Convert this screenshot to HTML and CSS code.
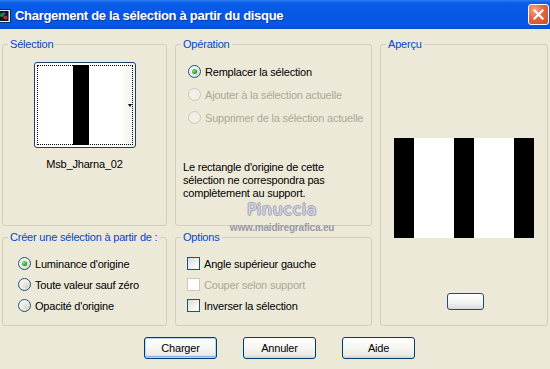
FILE: index.html
```html
<!DOCTYPE html>
<html lang="fr">
<head>
<meta charset="utf-8">
<title>Chargement de la sélection à partir du disque</title>
<link rel="stylesheet" href="styles.css">
</head>
<body>
<div class="dialog">
  <div class="titlebar">
    <svg class="app-icon" width="13" height="14" viewBox="0 0 13 14">
      <rect x="0.5" y="0.5" width="12" height="13" fill="#e8eef8" stroke="#1a2a50"/>
      <rect x="1.5" y="2" width="9" height="10" fill="#101820"/>
      <circle cx="4" cy="6" r="2" fill="#2a8a3a"/>
      <circle cx="7.5" cy="8.5" r="2" fill="#b02a4a"/>
      <circle cx="6" cy="4.5" r="1.3" fill="#3a5ad0"/>
    </svg>
    <span class="title">Chargement de la sélection à partir du disque</span>
    <span class="close">
      <svg width="11" height="11" viewBox="0 0 11 11"><path d="M1.5 1.5 L9.5 9.5 M9.5 1.5 L1.5 9.5" stroke="#fff" stroke-width="2.2" stroke-linecap="square"/></svg>
    </span>
  </div>

  <div class="content">
    <fieldset class="group g-selection">
      <legend>Sélection</legend>
      <div class="thumb">
        <div class="thumb-focus"><span class="thumb-bar"></span></div>
        <span class="thumb-arrow"></span>
      </div>
      <div class="caption">Msb_Jharna_02</div>
    </fieldset>

    <fieldset class="group g-operation">
      <legend>Opération</legend>
      <div class="choices">
        <div class="choice"><span class="radio checked"></span><span>Remplacer la sélection</span></div>
        <div class="choice disabled"><span class="radio"></span><span>Ajouter à la sélection actuelle</span></div>
        <div class="choice disabled"><span class="radio"></span><span>Supprimer de la sélection actuelle</span></div>
      </div>
      <p class="note">Le rectangle d'origine de cette<br>sélection ne correspondra pas<br>complètement au support.</p>
    </fieldset>

    <fieldset class="group g-apercu">
      <legend>Aperçu</legend>
      <div class="preview">
        <span class="stripe black"></span>
        <span class="stripe white"></span>
        <span class="stripe black"></span>
        <span class="stripe white"></span>
        <span class="stripe black"></span>
      </div>
      <div class="mini-btn"></div>
    </fieldset>

    <fieldset class="group g-creer">
      <legend>Créer une sélection à partir de :</legend>
      <div class="choices tight">
        <div class="choice"><span class="radio checked"></span><span>Luminance d'origine</span></div>
        <div class="choice"><span class="radio"></span><span>Toute valeur sauf zéro</span></div>
        <div class="choice"><span class="radio"></span><span>Opacité d'origine</span></div>
      </div>
    </fieldset>

    <fieldset class="group g-options">
      <legend>Options</legend>
      <div class="choices tight">
        <div class="choice"><span class="check"></span><span>Angle supérieur gauche</span></div>
        <div class="choice disabled"><span class="check"></span><span>Couper selon support</span></div>
        <div class="choice"><span class="check"></span><span>Inverser la sélection</span></div>
      </div>
    </fieldset>
  </div>

  <div class="buttons">
    <button class="btn default">Charger</button>
    <button class="btn">Annuler</button>
    <button class="btn">Aide</button>
  </div>

  <div class="watermark">
    <div class="wm-name">Pinuccia</div>
    <div class="wm-url">www.maidiregrafica.eu</div>
  </div>
</div>
</body>
</html>
```

FILE: styles.css
```css
* { box-sizing: border-box; }

html, body {
  margin: 0;
  padding: 0;
  background: #ece9d8;
}

body {
  width: 550px;
  height: 369px;
  overflow: hidden;
  font-family: "Liberation Sans", Arial, sans-serif;
  font-size: 11px;
  letter-spacing: -0.2px;
  color: #000;
}

.dialog {
  position: relative;
  width: 550px;
  height: 369px;
}

/* ---------- title bar ---------- */
.titlebar {
  height: 29px;
  display: flex;
  align-items: center;
  background: linear-gradient(to bottom, #2c7bf2 0%, #0a5ee8 10%, #0458e4 45%, #0557e6 85%, #0a4cd0 100%);
  color: #fff;
  position: relative;
}

.app-icon {
  margin-left: -2px;
  margin-top: 2px;
  flex: none;
}

.title {
  margin-left: 4px;
  font-size: 13px;
  font-weight: bold;
  letter-spacing: -0.3px;
  text-shadow: 1px 1px 0 #0a3a9a;
  white-space: nowrap;
  margin-top: 1px;
}

.close {
  margin-left: auto;
  margin-right: 1px;
  width: 21px;
  height: 21px;
  border: 1px solid #fff;
  border-radius: 3px;
  background: radial-gradient(circle at 30% 25%, #f4a585 0%, #e4663e 45%, #d04a24 100%);
  display: flex;
  align-items: center;
  justify-content: center;
}

/* ---------- groups ---------- */
.content {
  display: grid;
  grid-template-columns: 165px 197px 168px;
  grid-template-rows: 188px 95px;
  column-gap: 8px;
  row-gap: 5px;
  padding: 9px 2px 0 2px;
}

.group {
  margin: 0;
  padding: 0;
  min-width: 0;
  border: 1px solid #d0d0bf;
  border-radius: 3px;
  display: flex;
  flex-direction: column;
}

.group legend {
  margin-left: 5px;
  padding: 0 2px;
  line-height: 13px;
  color: #0046d5;
}

.g-selection { grid-column: 1; grid-row: 1; align-items: center; }
.g-operation { grid-column: 2; grid-row: 1; }
.g-apercu    { grid-column: 3; grid-row: 1 / span 2; align-items: center; }
.g-creer     { grid-column: 1; grid-row: 2; }
.g-options   { grid-column: 2; grid-row: 2; }

/* ---------- selection thumbnail ---------- */
.thumb {
  position: relative;
  margin-top: 11px;
  width: 102px;
  height: 86px;
  border: 1px solid #1c3f6e;
  border-radius: 3px;
  padding: 2px;
  background: linear-gradient(to right, #ffffff 85%, #eeeee8 100%);
}

.thumb-focus {
  height: 100%;
  border: 1px dotted #000;
  display: flex;
}

.thumb-bar {
  width: 16px;
  margin: -1px 0 -1px 35px;
  background: #000;
}

.thumb-arrow {
  position: absolute;
  right: 3px;
  top: 41px;
  width: 0;
  height: 0;
  border-left: 2.5px solid transparent;
  border-right: 2.5px solid transparent;
  border-top: 3px solid #000;
}

.caption {
  margin-top: 10px;
  line-height: 13px;
}

/* ---------- radios / checks ---------- */
.choices {
  display: flex;
  flex-direction: column;
  padding-top: 9px;
}

.choice {
  height: 23px;
  display: flex;
  align-items: center;
  gap: 4px;
  white-space: nowrap;
}

.choices.tight .choice { height: 21px; }

.choice.disabled { color: #aca899; }

.radio {
  flex: none;
  width: 13px;
  height: 13px;
  border: 1px solid #1c5180;
  border-radius: 50%;
  background: radial-gradient(circle at 70% 70%, #d6d4ca 0%, #f0efe8 50%, #ffffff 100%);
  display: flex;
  align-items: center;
  justify-content: center;
}

.radio.checked::after {
  content: "";
  width: 5px;
  height: 5px;
  border-radius: 50%;
  background: radial-gradient(circle at 35% 35%, #8fe08a 0%, #2aa52a 60%, #1b8a1b 100%);
}

.choice.disabled .radio {
  border-color: #cac8bb;
  background: #f2f0e6;
}

.check {
  flex: none;
  width: 13px;
  height: 13px;
  border: 1px solid #1c5180;
  background: linear-gradient(135deg, #dcdcd5 0%, #f4f4ef 60%, #ffffff 100%);
}

.choice.disabled .check {
  border-color: #cac8bb;
  background: #ffffff;
}

.g-operation .choices { padding-left: 12px; }
.g-creer .choices { padding-left: 15px; padding-top: 9px; }
.g-options .choices { padding-left: 11px; padding-top: 9px; }

.note {
  margin: 32px 0 0 7px;
  line-height: 13px;
}

/* ---------- preview ---------- */
.preview {
  margin-top: 87px;
  width: 140px;
  height: 100px;
  display: flex;
}

.stripe { height: 100%; }
.stripe.black { width: 20px; background: #000; }
.stripe.white { width: 40px; background: #fff; }

.mini-btn {
  margin-top: 55px;
  margin-left: 3px;
  width: 37px;
  height: 17px;
  border: 1px solid #1c4c80;
  border-radius: 3px;
  background: linear-gradient(to bottom, #ffffff 0%, #f2f2ee 60%, #dcdad2 100%);
}

/* ---------- buttons ---------- */
.buttons {
  display: flex;
  gap: 26px;
  padding-left: 144px;
  margin-top: 11px;
}

.btn {
  width: 73px;
  height: 22px;
  padding: 0;
  font-family: "Liberation Sans", Arial, sans-serif;
  font-size: 11px;
  letter-spacing: -0.2px;
  color: #000;
  border: 1px solid #003c74;
  border-radius: 3px;
  background: linear-gradient(to bottom, #ffffff 0%, #f6f6f2 50%, #ecebe4 85%, #d6d0c5 100%);
}

.btn.default {
  box-shadow: inset 0 0 0 1px #bcd4f6, inset 0 -1px 0 1px #89ade4;
}

/* ---------- watermark ---------- */
.watermark {
  position: absolute;
  left: 228px;
  top: 199px;
  width: 108px;
  text-align: center;
  pointer-events: none;
}

.wm-name {
  font-family: "DejaVu Sans", sans-serif;
  font-size: 16px;
  line-height: 22px;
  letter-spacing: 0.5px;
  color: #d4d4e0;
  text-shadow: -1px 0 0 #a4a4b8, 1px 0 0 #a4a4b8, 0 -1px 0 #a4a4b8, 0 1px 0 #a4a4b8;
}

.wm-url {
  margin-top: 1px;
  font-size: 10px;
  line-height: 12px;
  letter-spacing: -0.2px;
  color: #9a9aa6;
  font-weight: bold;
}
```
